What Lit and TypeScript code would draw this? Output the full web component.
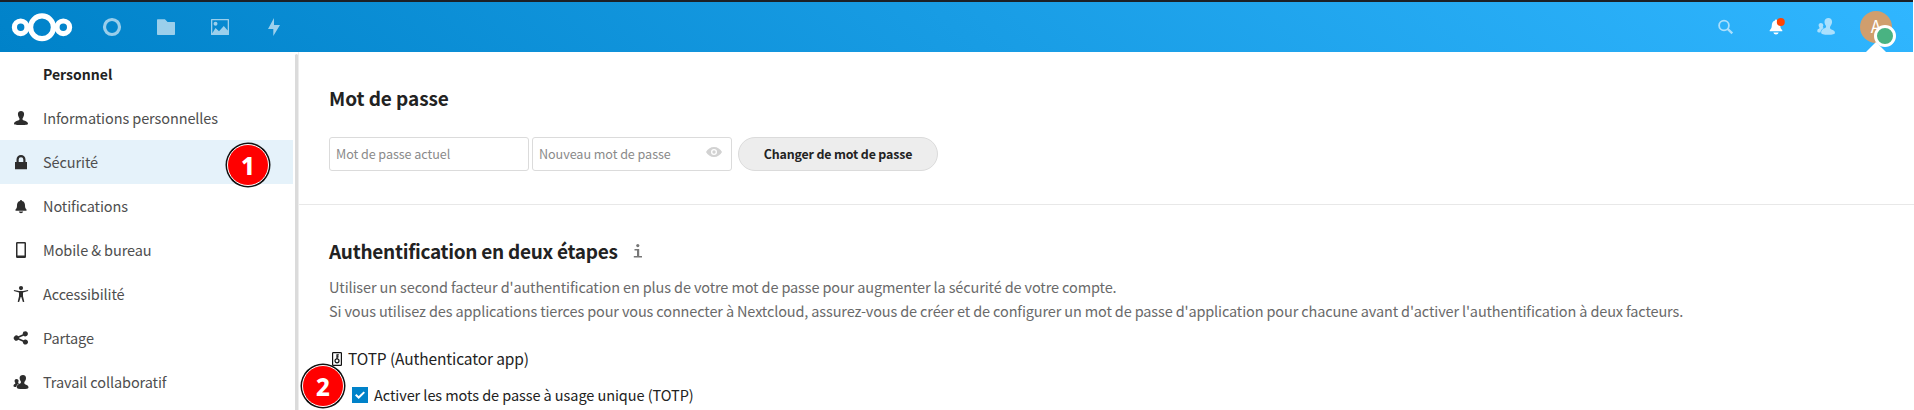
import { LitElement, html, css, svg } from "lit";
import { customElement } from "lit/decorators.js";
import { classMap } from "lit/directives/class-map.js";

const icons = {
  user: svg`<path d="M8 1C6.300 1 4.900 2.200 4.900 4c0 1.200.3 2.400 1 3.400.4.600.6 1 .6 1.500 0 .8-.4 1.100-1.500 1.500C2.800 11.200 1.200 11.600 1 13.500c0 1 .8 1.500 7 1.500s7-.5 7-1.500c-.2-1.900-1.800-2.300-4-3.100-1.100-.4-1.500-.7-1.500-1.500 0-.5.2-.9.600-1.500.7-1 1-2.200 1-3.400C11.100 2.200 9.700 1 8 1z"/>`,
  lock: svg`<path d="M8 1a4.500 4.500 0 0 0-4.500 4.500V8H2v7.200h12V8h-1.500V5.500A4.500 4.500 0 0 0 8 1zm0 2.200a2.300 2.300 0 0 1 2.300 2.300V8H5.700V5.500A2.300 2.300 0 0 1 8 3.200z"/>`,
  bell: svg`<path d="M8 2C7.400 2 7 2.500 7 3.100 4.700 3.600 4 5.500 4 7.400c0 2.300-.5 3-1.500 4.100v1.200h11v-1.200c-1-1.100-1.500-1.800-1.500-4.100 0-1.900-.7-3.800-3-4.300C9 2.500 8.600 2 8 2zM5.800 13.500c.3 1 1.200 1.700 2.200 1.700s1.900-.7 2.200-1.700z"/>`,
  phone: svg`<path fill-rule="evenodd" d="M4.200 0h7.600A1.200 1.200 0 0 1 13 1.200v13.600a1.200 1.200 0 0 1-1.200 1.200H4.200A1.200 1.200 0 0 1 3 14.800V1.200A1.200 1.200 0 0 1 4.200 0zM4.500 1.500V13.500h7V1.500z"/>`,
  access: svg`<circle cx="8" cy="2.100" r="2.100"/><path d="M1 3.900l5 1h4l5-1 .2 1.100L10 6.600v3.700l1.300 5.500-1.400.3L8.300 11h-.6l-1.600 5.100-1.400-.3L6 10.300V6.600L.8 5z"/>`,
  share: svg`<path d="M12.300 1.200a2.600 2.600 0 0 0-2.500 3L5.300 6.300a2.600 2.600 0 1 0 0 3.500l4.500 2a2.600 2.600 0 1 0 .7-1.600L6 8.200v-.4l4.600-2a2.600 2.600 0 1 0 1.700-4.600z"/>`,
  people: svg`<path d="M10 .9C8 .9 6.600 2.100 6.600 4c0 1.200.4 2.300 1.100 3.200.5.700.3 1.500-.2 2-1 .7-3.400 1-3.700 3.600v.8c0 1 2 1.500 5.900 1.500s5.800-.4 5.800-1.500c-.1-2-1.300-2.300-3-3-1.300-.5-1.600-1.800-.8-3C12.500 6.600 13 5.300 13 4 13 2.100 11.800.9 10 .9z"/><path d="M3.500 5C2.300 5 1.500 5.800 1.600 7c0 .7.200 1.200.6 1.700.3.500.2 1-.3 1.300C.8 10.400.5 10.800.5 12c0 .7.700 1.100 2.700 1.100.2-1.800 1.200-3 3-3.700-.8-.3-1.300-.7-.9-1.400.3-.4.300-.8.300-1.200C5.500 5.700 4.600 5 3.500 5z"/>`,
};

const entries: { label: string; icon: keyof typeof icons; active?: boolean }[] = [
  { label: "Informations personnelles", icon: "user" },
  { label: "Sécurité", icon: "lock", active: true },
  { label: "Notifications", icon: "bell" },
  { label: "Mobile & bureau", icon: "phone" },
  { label: "Accessibilité", icon: "access" },
  { label: "Partage", icon: "share" },
  { label: "Travail collaboratif", icon: "people" },
];

@customElement("top-bar")
class TopBar extends LitElement {
  static styles = css`
    :host { display: flex; box-sizing: border-box; height: 52px; width: 1913px; border-top: 2px solid #1c2026;
      background: linear-gradient(40deg, #0082c9 0%, #30b6ff 100%); align-items: stretch; justify-content: space-between; }
    .group { display: flex; }
    svg { display: block; fill: #fff; }
    .dim { opacity: .6; }
    .right { margin-right: 12px; }
    .account { position: relative; width: 50px; }
    .avatar { position: absolute; left: 9px; top: 9px; width: 32px; height: 32px; border-radius: 50%; background: #d09e6d;
      color: #fff; font: 17px/30px "Noto Sans CJK SC", sans-serif; text-align: center; }
    .arrow { position: absolute; left: 15px; bottom: 0; border: 10px solid transparent; border-top: 0; border-bottom-color: #fff; }
    .status { position: absolute; left: 23px; top: 23px; width: 16px; height: 16px; border: 3px solid #fff; border-radius: 50%; background: #49b382; }
  `;
  render() {
    return html`
      <div class="group">
        <svg width="85" height="50" viewBox="0 2 85 50"><g fill="none" stroke="#fff" stroke-width="5.200">
          <circle cx="42" cy="27.300" r="11.400"/><circle cx="20.700" cy="27.300" r="6.300"/><circle cx="63.300" cy="27.300" r="6.300"/></g></svg>
        <svg class="dim" width="54" height="50" viewBox="85 2 54 50"><circle cx="112" cy="27" r="7.500" fill="none" stroke="#fff" stroke-width="3.200"/></svg>
        <svg class="dim" width="54" height="50" viewBox="139 2 54 50"><path d="M157.600 19.300h7.300l2.700 2.700h6.800q.6 0 .6.600v11.600q0 .8-.8.8h-16.400q-.8 0-.8-.8V19.900q0-.6.6-.6z"/></svg>
        <svg class="dim" width="54" height="50" viewBox="193 2 54 50"><path fill-rule="evenodd" d="M211.600 19h16.800q.6 0 .6.600v14.800q0 .6-.6.600h-16.800q-.6 0-.6-.6V19.600q0-.6.6-.6zM212.300 20.300v13l3.200-5.300 3.500 3.300 4.800-5.300 3.900 4.400v-10.100z"/><circle cx="215.500" cy="23.800" r="2"/></svg>
        <svg class="dim" width="54" height="50" viewBox="247 2 54 50"><path d="M274 18l-6 11h5.300v7l6.700-11h-6z"/></svg>
      </div>
      <div class="group right">
        <svg class="dim" width="50" height="50" viewBox="1701 2 50 50"><circle cx="1724" cy="25.500" r="4.900" fill="none" stroke="#fff" stroke-width="1.800"/><path d="M1727.300 28.700l5 4.600" stroke="#fff" stroke-width="2.300"/></svg>
        <svg width="50" height="50" viewBox="1751 2 50 50"><path d="M1776 19.500c-.7 0-1 .5-1 1.100-2.500.5-3.100 2.900-3.200 5-.1 2.600-.8 3.400-2.100 4.700V31.300h12.600V30.300c-1.400-1.300-1.900-2.100-2-4.700-.1-2.100-.8-4.500-3.300-5 0-.6-.3-1.100-1-1.100zM1773.300 32.400q.5 2 2.700 2t2.700-2z"/><circle cx="1780.800" cy="22" r="4" fill="#ff4402"/></svg>
        <svg class="dim" width="50" height="50" viewBox="1801 2 50 50"><g transform="translate(1816.700 17) scale(1.180)">${icons.people}</g></svg>
        <div class="account"><div class="avatar">A</div><div class="arrow"></div><div class="status"></div></div>
      </div>`;
  }
}

@customElement("settings-nav")
class SettingsNav extends LitElement {
  static styles = css`
    :host { display: block; width: 299px; height: 358px; box-sizing: border-box; border-right: 1px solid #ededed; position: relative; flex: none;
      font: 14.500px/43px "Noto Sans CJK SC", sans-serif; color: #4e4e4e; letter-spacing: -.1px; }
    .title { height: 44px; padding-left: 43px; font-weight: 700; font-size: 14px; line-height: 45px; color: #222; letter-spacing: 0; }
    .row { display: flex; align-items: center; height: 44px; width: 293px; box-sizing: border-box; padding-left: 13px; gap: 14px; }
    .row span { height: 44px; }
    .row.active { background: #e5f2fa; }
    svg { width: 16px; height: 16px; fill: #2d2d2d; flex: none; }
    .bar { position: absolute; right: 0; top: 2px; bottom: 0; width: 3px; background: #dbdbdb; border-radius: 2px 2px 0 0; }
  `;
  render() {
    return html`<div class="title">Personnel</div>
      ${entries.map(e => html`<div class=${classMap({ row: true, active: !!e.active })}>
        <svg viewBox="0 0 16 16">${icons[e.icon]}</svg><span>${e.label}</span></div>`)}
      <div class="bar"></div>`;
  }
}

@customElement("app-root")
class AppRoot extends LitElement {
  static styles = css`
    :host { display: block; position: relative; height: 410px; overflow: hidden; background: #fff; font: 14.500px/24px "Noto Sans CJK SC", sans-serif; color: #222; }
    .body { display: flex; }
    main { flex: 1; }
    section { padding-left: 30px; }
    .password { height: 153px; box-sizing: border-box; padding-top: 31px; border-bottom: 1px solid #e8e8e8; }
    h2 { margin: 0; font-size: 19px; line-height: 30px; font-weight: 700; letter-spacing: -.06px; }
    .form { display: flex; margin-top: 24px; font-size: 12.600px; line-height: 32px; }
    .field { display: flex; align-items: center; justify-content: space-between; box-sizing: border-box; width: 200px; height: 34px; margin-right: 3px; padding: 0 9px 0 6px;
      border: 1px solid #dbdbdb; border-radius: 3px; color: #8a8a8a; letter-spacing: -.06px; }
    .eye { margin-top: -4px; }
    .submit { box-sizing: border-box; width: 200px; height: 34px; margin-left: 3px; border: 1px solid #dbdbdb; border-radius: 17px; background: #ededed;
      text-align: center; font-weight: 700; font-size: 12.400px; letter-spacing: -.15px; }
    .twofactor { padding-top: 31px; }
    .heading { display: flex; align-items: center; gap: 15px; }
    .heading h2 { letter-spacing: -.28px; }
    .desc { margin: 9px 0 0; color: #6a6a6a; white-space: nowrap; letter-spacing: -.128px; }
    .desc.second { margin-top: 0; letter-spacing: -.139px; }
    .provider { display: flex; align-items: center; gap: 5px; margin-top: 23px; padding-left: 2px; height: 24px; font-size: 15.500px; letter-spacing: -.12px; }
    .provider svg { margin-top: 2px; }
    .option { display: flex; align-items: center; gap: 6px; margin-top: 13px; padding-left: 23px; height: 24px; letter-spacing: -.07px; }
    .box { width: 16px; height: 16px; background: #0082c9; }
    .box svg { display: block; }
    .badge { position: absolute; width: 40px; height: 40px; border-radius: 50%; background: #f00; border: 1px solid #fff;
      box-shadow: 0 0 0 1.500px #111; color: #fff; font: 800 24px/41px "Noto Sans", sans-serif; text-align: center; }
    .one { left: 227px; top: 144px; }
    .two { left: 302px; top: 365px; }
  `;
  render() {
    return html`<top-bar></top-bar>
      <div class="body"><settings-nav></settings-nav>
        <main>
          <section class="password">
            <h2>Mot de passe</h2>
            <div class="form">
              <div class="field">Mot de passe actuel</div>
              <div class="field">Nouveau mot de passe
                <svg class="eye" width="16" height="10" viewBox="0 0 16 10" fill="#d2d2d2"><path fill-rule="evenodd" d="M8 0C4.500 0 1.500 2.100 0 5c1.500 2.900 4.500 5 8 5s6.500-2.100 8-5C14.500 2.100 11.500 0 8 0zm0 2a3 3 0 1 1 0 6 3 3 0 0 1 0-6z"/><circle cx="8" cy="5" r="1.700"/></svg>
              </div>
              <div class="submit">Changer de mot de passe</div>
            </div>
          </section>
          <section class="twofactor">
            <div class="heading"><h2>Authentification en deux étapes</h2>
              <svg width="10" height="14" viewBox="0 0 10 14" fill="#777"><circle cx="4.800" cy="1.600" r="1.600"/><path d="M1.500 5h4.700v7H9v1.600H.8V12h3.200V6.600H1.500z"/></svg></div>
            <p class="desc">Utiliser un second facteur d'authentification en plus de votre mot de passe pour augmenter la sécurité de votre compte.</p>
            <p class="desc second">Si vous utilisez des applications tierces pour vous connecter à Nextcloud, assurez-vous de créer et de configurer un mot de passe d'application pour chacune avant d'activer l'authentification à deux facteurs.</p>
            <div class="provider">
              <svg width="12" height="16" viewBox="0 0 12 16"><g fill="none" stroke="#111" stroke-width="1.200"><rect x="1.600" y="1.600" width="8.800" height="12.800" rx=".6"/><circle cx="6" cy="9.800" r="2"/><path d="M6 8V3.200M6 3.800h1.800M6 5.800h1.600"/></g></svg>
              TOTP (Authenticator app)</div>
            <div class="option"><span class="box"><svg width="16" height="16" viewBox="0 0 16 16"><path d="M3.700 7.700l3 2.800 5.600-5.400" fill="none" stroke="#fff" stroke-width="2"/></svg></span>Activer les mots de passe à usage unique (TOTP)</div>
          </section>
        </main>
      </div>
      <div class="badge one">1</div><div class="badge two">2</div>`;
  }
}
